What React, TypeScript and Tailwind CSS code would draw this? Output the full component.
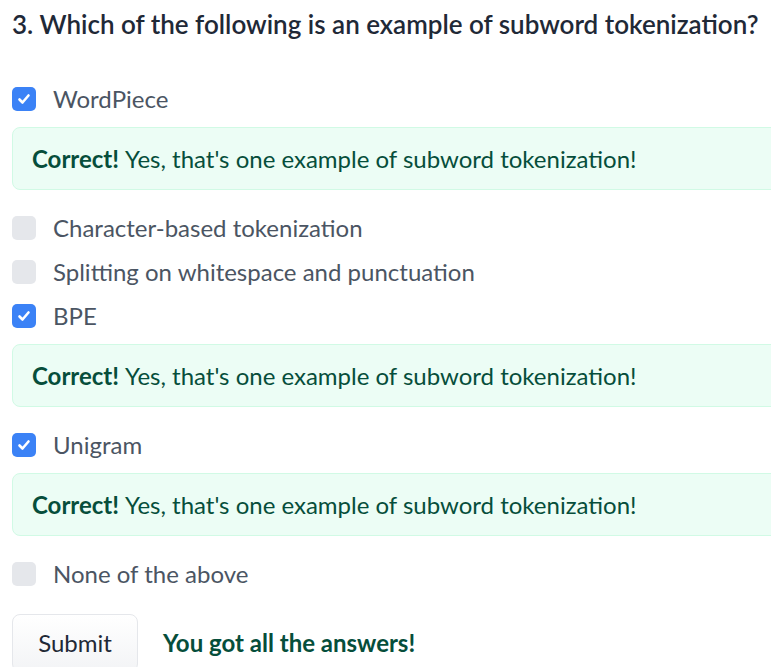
import React from "react";

const Check = ({ checked }: { checked: boolean }) => (
  <div
    className={
      checked
        ? "w-6 h-6 rounded-[5px] bg-[#3b82f6] flex items-center justify-center shrink-0"
        : "w-6 h-6 rounded-[5px] bg-[#e5e7eb] shrink-0"
    }
  >
    {checked && (
      <svg width="16" height="16" viewBox="0 0 16 16" fill="none">
        <path d="M3.5 8.5l3 3 6-7" stroke="white" strokeWidth="2.6" strokeLinecap="round" strokeLinejoin="round" />
      </svg>
    )}
  </div>
);

const Option = ({ label, checked }: { label: string; checked: boolean }) => (
  <div className="h-[44px] flex items-center gap-[17px]">
    <Check checked={checked} />
    <span className="text-[24px] text-[#4b5563]">{label}</span>
  </div>
);

const Correct = () => (
  <div className="mt-[6px] mb-[16px] h-[63px] w-[780px] flex items-center pl-[19px] rounded-lg border border-[#d1fae5] bg-[#ecfdf5] text-[24px] text-[#064e3b]">
    <span className="font-bold mr-[6px]">Correct!</span>
    <span>Yes, that's one example of subword tokenization!</span>
  </div>
);

export default function App() {
  return (
    <div className="w-[771px] h-[667px] overflow-hidden bg-white px-3" style={{ fontFamily: "Lato, sans-serif" }}>
      <div className="h-[48px] flex items-center text-[26px] font-semibold text-[#1f2937] whitespace-nowrap">
        3. Which of the following is an example of subword tokenization?
      </div>
      <div className="mt-[29px]">
        <Option label="WordPiece" checked />
        <Correct />
        <Option label="Character-based tokenization" checked={false} />
        <Option label="Splitting on whitespace and punctuation" checked={false} />
        <Option label="BPE" checked />
        <Correct />
        <Option label="Unigram" checked />
        <Correct />
        <Option label="None of the above" checked={false} />
      </div>
      <div className="mt-[18px] flex items-center gap-[25px]">
        <button className="h-[58px] w-[126px] rounded-lg border border-[#e5e7eb] bg-gradient-to-b from-white to-[#f3f4f6] text-[24px] text-[#1f2937]">
          Submit
        </button>
        <span className="text-[24px] font-bold text-[#064e3b]">You got all the answers!</span>
      </div>
    </div>
  );
}
